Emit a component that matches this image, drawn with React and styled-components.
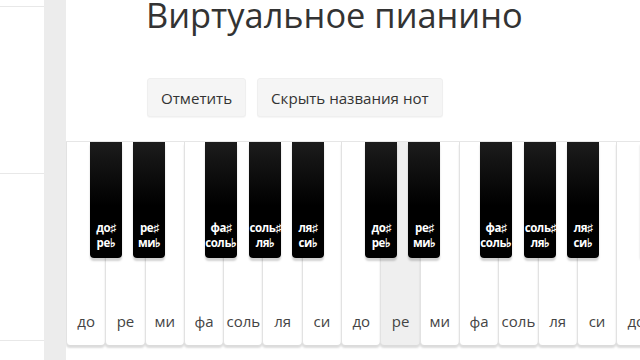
import React from "react";
import styled, { createGlobalStyle } from "styled-components";

const GlobalStyle = createGlobalStyle`
    html, body {
        margin: 0;
        padding: 0;
        background-color: #ececec;
        overflow: hidden;
        font-family: "Open Sans", "Liberation Sans", sans-serif;
    }
`

const Page = styled.div`
    display: flex;
    width: 640px;
    height: 360px;
    overflow: hidden;
`
const Sidebar = styled.div`
    width: 44px;
    flex-shrink: 0;
    background-color: #ffffff;
    padding-top: 6px;
    box-sizing: border-box;
`
const SideItem = styled.div`
    height: 167px;
    border-top: 1px solid #e8e8e8;
    box-sizing: border-box;
`
const Main = styled.div`
    flex: 1;
    margin-left: 22px;
    background-color: #ffffff;
    overflow: hidden;
`
const Header = styled.div`
    padding-left: 80px;
`
const Title = styled.h1`
    margin: -2px 0 0;
    font-size: 34.4px;
    line-height: 1;
    font-weight: 400;
    color: #333333;
    white-space: nowrap;
`
const ButtonsRow = styled.div`
    display: flex;
    gap: 11px;
    margin-top: 46px;
    padding-left: 1px;
`
const Button = styled.button`
    height: 39px;
    padding: 0 13px;
    background-color: #f5f5f5;
    border: 1px solid #efefef;
    border-radius: 3px;
    box-shadow: 0 1px 1px rgba(0,0,0,0.04);
    font-family: "Open Sans", "Liberation Sans", sans-serif;
    font-size: 15.1px;
    color: #333333;
`
const Keyboard = styled.div`
    display: flex;
    margin-top: 24px;
    border-top: 1px solid #e6e6e6;
    padding-bottom: 6px;
`
const WhiteKey = styled.div`
    position: relative;
    flex-shrink: 0;
    width: 39.3px;
    height: 203px;
    box-sizing: border-box;
    background-color: ${props => props.$pressed ? "#efefef" : "#ffffff"};
    border-left: 1px solid #e2e2e2;
    border-radius: 0 0 4px 4px;
    box-shadow: 0 3px 2px rgba(0,0,0,0.14);
    display: flex;
    align-items: flex-end;
    justify-content: center;
    padding-bottom: 14px;
    font-size: 15px;
    color: #444444;
`
const BlackKey = styled.div`
    position: absolute;
    top: 0;
    left: ${props => props.$left}px;
    z-index: 2;
    width: 32px;
    height: 116px;
    box-sizing: border-box;
    background: linear-gradient(#1c1c1c, #000000 55%);
    border-radius: 0 0 4px 4px;
    box-shadow: 0 3px 2px rgba(0,0,0,0.18);
    display: flex;
    flex-direction: column;
    justify-content: flex-end;
    align-items: center;
    padding-bottom: 8px;
    color: #ffffff;
    font-size: 11.5px;
    font-weight: 700;
    line-height: 15px;
    letter-spacing: -0.4px;
    white-space: nowrap;
`

const octave = [
    { name: "до", black: ["до♯", "ре♭"], left: 23 },
    { name: "ре", black: ["ре♯", "ми♭"], left: 27 },
    { name: "ми" },
    { name: "фа", black: ["фа♯", "соль♭"], left: 20 },
    { name: "соль", black: ["соль♯", "ля♭"], left: 25 },
    { name: "ля", black: ["ля♯", "си♭"], left: 28.5 },
    { name: "си" },
];

const keys = [...octave, ...octave, ...octave].map((k, i) => ({ ...k, id: i }));

export default function App(){
    return(
        <Page>
            <GlobalStyle/>
            <Sidebar>
                <SideItem/>
                <SideItem/>
                <SideItem/>
            </Sidebar>
            <Main>
                <Header>
                    <Title>Виртуальное пианино</Title>
                    <ButtonsRow>
                        <Button>Отметить</Button>
                        <Button>Скрыть названия нот</Button>
                    </ButtonsRow>
                </Header>
                <Keyboard>
                    {keys.map(k => (
                        <WhiteKey key={k.id} $pressed={k.id === 8}>
                            {k.black && (
                                <BlackKey $left={k.left}>
                                    <span>{k.black[0]}</span>
                                    <span>{k.black[1]}</span>
                                </BlackKey>
                            )}
                            {k.name}
                        </WhiteKey>
                    ))}
                </Keyboard>
            </Main>
        </Page>
    )
};
